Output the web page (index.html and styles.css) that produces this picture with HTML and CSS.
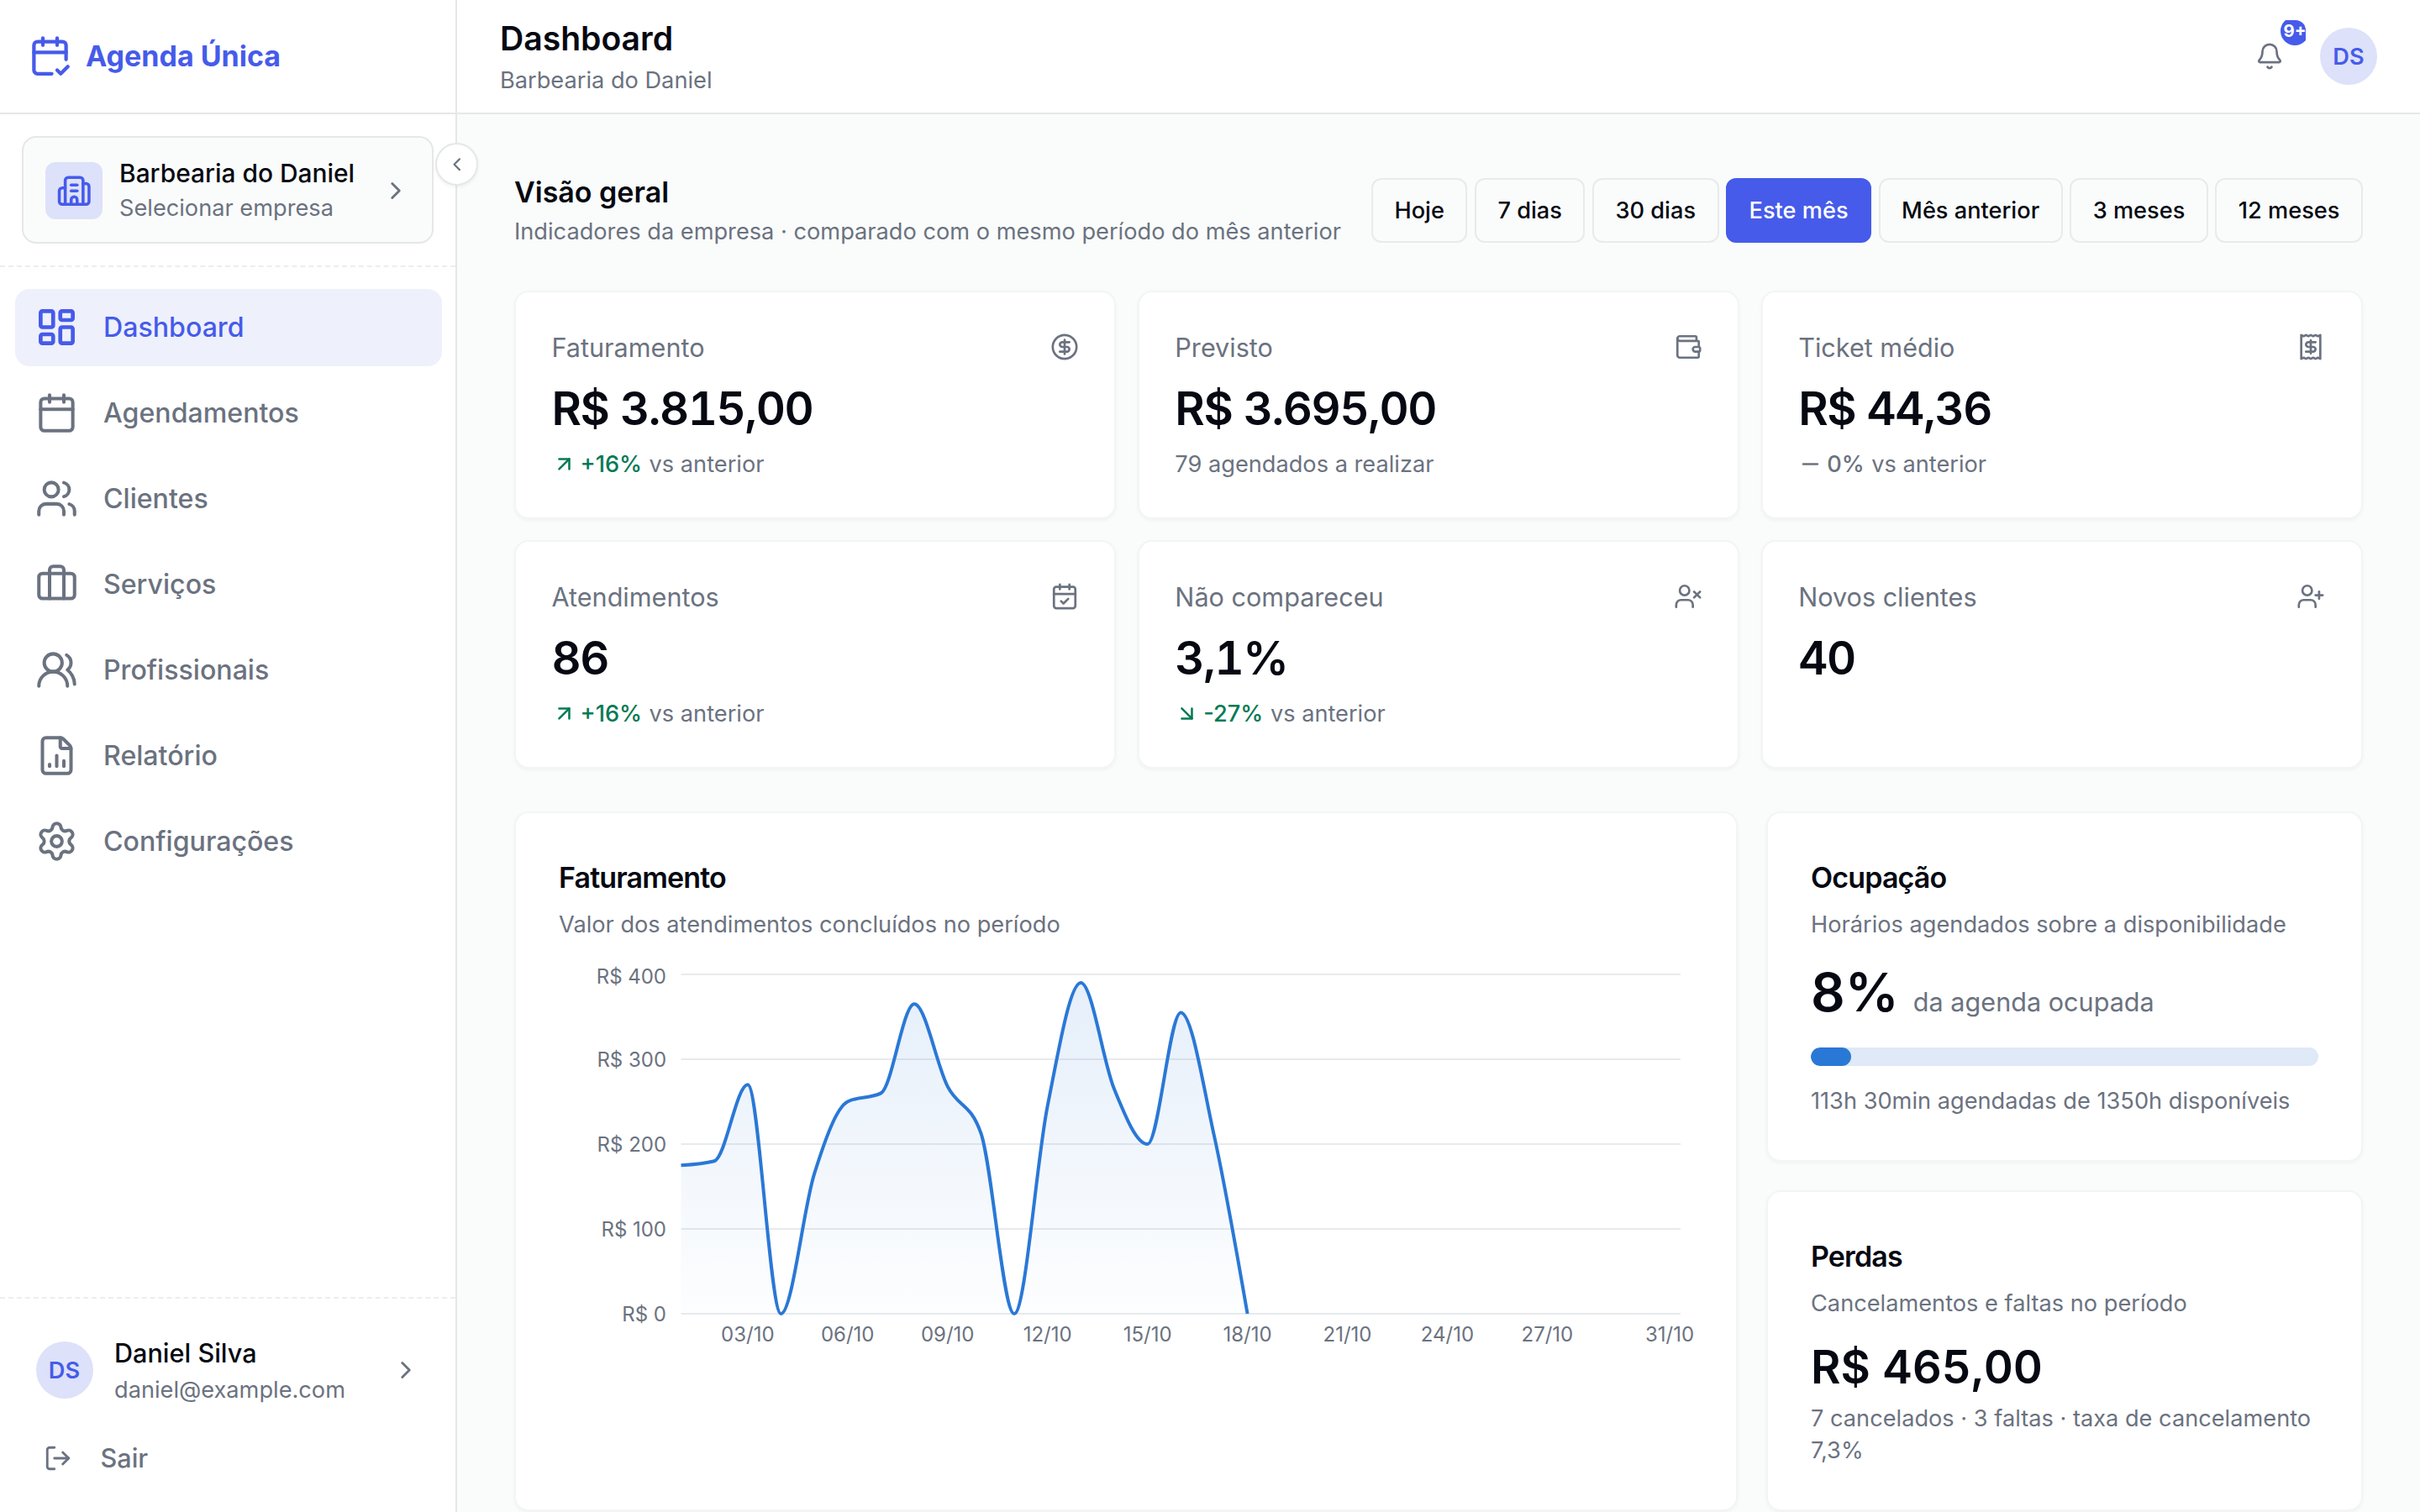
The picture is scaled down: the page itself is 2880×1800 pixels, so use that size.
FILE: index.html
```html
<!DOCTYPE html>
<html lang="pt-BR">
<head>
    <meta charset="UTF-8">
    <meta name="viewport" content="width=device-width, initial-scale=1.0">
    <title>Dashboard - Agenda Única</title>
    <link rel="stylesheet" href="styles.css">
</head>
<body>

<div class="app">
    <aside class="sidebar">
        <div class="brand">
            <svg class="icon icon-lg" viewBox="0 0 24 24"><path d="M8 2v4"/><path d="M16 2v4"/><path d="M21 14V6a2 2 0 0 0-2-2H5a2 2 0 0 0-2 2v14a2 2 0 0 0 2 2h8"/><path d="M3 10h18"/><path d="m16 20 2 2 4-4"/></svg>
            <span>Agenda Única</span>
        </div>

        <button class="collapse" aria-label="Recolher menu">
            <svg class="icon icon-xs" viewBox="0 0 24 24"><path d="m15 18-6-6 6-6"/></svg>
        </button>

        <div class="company-wrap">
            <button class="company">
                <span class="company-icon">
                    <svg class="icon icon-md" viewBox="0 0 24 24"><path d="M10 12h4"/><path d="M10 8h4"/><path d="M14 21v-3a2 2 0 0 0-4 0v3"/><path d="M6 10H4a2 2 0 0 0-2 2v7a2 2 0 0 0 2 2h16a2 2 0 0 0 2-2V9a2 2 0 0 0-2-2h-2"/><path d="M6 21V5a2 2 0 0 1 2-2h8a2 2 0 0 1 2 2v16"/></svg>
                </span>
                <span class="two-lines">
                    <span class="line-main">Barbearia do Daniel</span>
                    <span class="line-sub">Selecionar empresa</span>
                </span>
                <svg class="icon icon-sm chevron" viewBox="0 0 24 24"><path d="m9 18 6-6-6-6"/></svg>
            </button>
        </div>

        <nav class="nav">
            <a class="nav-item active">
                <svg class="icon icon-lg" viewBox="0 0 24 24"><rect x="3" y="3" width="7" height="9" rx="1"/><rect x="14" y="3" width="7" height="5" rx="1"/><rect x="14" y="12" width="7" height="9" rx="1"/><rect x="3" y="16" width="7" height="5" rx="1"/></svg>
                Dashboard
            </a>
            <a class="nav-item">
                <svg class="icon icon-lg" viewBox="0 0 24 24"><path d="M8 2v4"/><path d="M16 2v4"/><rect x="3" y="4" width="18" height="18" rx="2"/><path d="M3 10h18"/></svg>
                Agendamentos
            </a>
            <a class="nav-item">
                <svg class="icon icon-lg" viewBox="0 0 24 24"><path d="M16 21v-2a4 4 0 0 0-4-4H6a4 4 0 0 0-4 4v2"/><circle cx="9" cy="7" r="4"/><path d="M22 21v-2a4 4 0 0 0-3-3.87"/><path d="M16 3.13a4 4 0 0 1 0 7.75"/></svg>
                Clientes
            </a>
            <a class="nav-item">
                <svg class="icon icon-lg" viewBox="0 0 24 24"><path d="M16 20V4a2 2 0 0 0-2-2h-4a2 2 0 0 0-2 2v16"/><rect x="2" y="6" width="20" height="14" rx="2"/></svg>
                Serviços
            </a>
            <a class="nav-item">
                <svg class="icon icon-lg" viewBox="0 0 24 24"><path d="M18 21a8 8 0 0 0-16 0"/><circle cx="10" cy="8" r="5"/><path d="M22 20c0-3.37-2-6.5-4-8a5 5 0 0 0-.45-8.3"/></svg>
                Profissionais
            </a>
            <a class="nav-item">
                <svg class="icon icon-lg" viewBox="0 0 24 24"><path d="M6 22a2 2 0 0 1-2-2V4a2 2 0 0 1 2-2h8a2.4 2.4 0 0 1 1.704.706l3.588 3.588A2.4 2.4 0 0 1 20 8v12a2 2 0 0 1-2 2z"/><path d="M14 2v5a1 1 0 0 0 1 1h5"/><path d="M8 18v-1"/><path d="M12 18v-6"/><path d="M16 18v-3"/></svg>
                Relatório
            </a>
            <a class="nav-item">
                <svg class="icon icon-lg" viewBox="0 0 24 24"><path d="M9.671 4.136a2.34 2.34 0 0 1 4.659 0 2.34 2.34 0 0 0 3.319 1.915 2.34 2.34 0 0 1 2.33 4.033 2.34 2.34 0 0 0 0 3.831 2.34 2.34 0 0 1-2.33 4.033 2.34 2.34 0 0 0-3.319 1.915 2.34 2.34 0 0 1-4.659 0 2.34 2.34 0 0 0-3.32-1.915 2.34 2.34 0 0 1-2.33-4.033 2.34 2.34 0 0 0 0-3.831A2.34 2.34 0 0 1 6.35 6.051a2.34 2.34 0 0 0 3.319-1.915"/><circle cx="12" cy="12" r="3"/></svg>
                Configurações
            </a>
        </nav>

        <div class="account">
            <div class="user">
                <span class="avatar">DS</span>
                <span class="two-lines">
                    <span class="line-main">Daniel Silva</span>
                    <span class="line-sub">daniel@example.com</span>
                </span>
                <svg class="icon icon-sm chevron" viewBox="0 0 24 24"><path d="m9 18 6-6-6-6"/></svg>
            </div>
            <a class="logout">
                <svg class="icon icon-sm" viewBox="0 0 24 24"><path d="m16 17 5-5-5-5"/><path d="M21 12H9"/><path d="M9 21H5a2 2 0 0 1-2-2V5a2 2 0 0 1 2-2h4"/></svg>
                Sair
            </a>
        </div>
    </aside>

    <div class="page">
        <header class="topbar">
            <div>
                <h1>Dashboard</h1>
                <p class="muted">Barbearia do Daniel</p>
            </div>
            <div class="topbar-actions">
                <button class="bell" aria-label="Notificações">
                    <svg class="icon icon-sm" viewBox="0 0 24 24"><path d="M10.268 21a2 2 0 0 0 3.464 0"/><path d="M3.262 15.326A1 1 0 0 0 4 17h16a1 1 0 0 0 .74-1.673C19.41 13.956 18 12.499 18 8A6 6 0 0 0 6 8c0 4.499-1.411 5.956-2.738 7.326"/></svg>
                    <span class="badge">9+</span>
                </button>
                <span class="avatar">DS</span>
            </div>
        </header>

        <main class="content">
            <div class="overview">
                <div>
                    <h2>Visão geral</h2>
                    <p class="muted">Indicadores da empresa · comparado com o mesmo período do mês anterior</p>
                </div>
                <div class="periods">
                    <button class="period">Hoje</button>
                    <button class="period">7 dias</button>
                    <button class="period">30 dias</button>
                    <button class="period selected">Este mês</button>
                    <button class="period">Mês anterior</button>
                    <button class="period">3 meses</button>
                    <button class="period">12 meses</button>
                </div>
            </div>

            <section class="kpis">
                <div class="card kpi">
                    <div class="kpi-head">
                        <span>Faturamento</span>
                        <svg class="icon icon-sm" viewBox="0 0 24 24"><circle cx="12" cy="12" r="10"/><path d="M16 8h-6a2 2 0 1 0 0 4h4a2 2 0 1 1 0 4H8"/><path d="M12 18V6"/></svg>
                    </div>
                    <div class="kpi-value">R$ 3.815,00</div>
                    <div class="kpi-foot">
                        <span class="delta good"><svg class="icon" viewBox="0 0 24 24"><path d="M7 7h10v10"/><path d="M7 17 17 7"/></svg>+16%</span>
                        vs anterior
                    </div>
                </div>
                <div class="card kpi">
                    <div class="kpi-head">
                        <span>Previsto</span>
                        <svg class="icon icon-sm" viewBox="0 0 24 24"><path d="M19 7V4a1 1 0 0 0-1-1H5a2 2 0 0 0 0 4h15a1 1 0 0 1 1 1v4h-3a2 2 0 0 0 0 4h3a1 1 0 0 0 1-1v-2a1 1 0 0 0-1-1"/><path d="M3 5v14a2 2 0 0 0 2 2h15a1 1 0 0 0 1-1v-4"/></svg>
                    </div>
                    <div class="kpi-value">R$ 3.695,00</div>
                    <div class="kpi-foot">79 agendados a realizar</div>
                </div>
                <div class="card kpi">
                    <div class="kpi-head">
                        <span>Ticket médio</span>
                        <svg class="icon icon-sm" viewBox="0 0 24 24"><path d="M4 2v20l2-1 2 1 2-1 2 1 2-1 2 1 2-1 2 1V2l-2 1-2-1-2 1-2-1-2 1-2-1-2 1Z"/><path d="M16 8h-6a2 2 0 1 0 0 4h4a2 2 0 1 1 0 4H8"/><path d="M12 17.5v-11"/></svg>
                    </div>
                    <div class="kpi-value">R$ 44,36</div>
                    <div class="kpi-foot">
                        <span class="delta"><svg class="icon" viewBox="0 0 24 24"><path d="M5 12h14"/></svg>0%</span>
                        vs anterior
                    </div>
                </div>
                <div class="card kpi">
                    <div class="kpi-head">
                        <span>Atendimentos</span>
                        <svg class="icon icon-sm" viewBox="0 0 24 24"><path d="M8 2v4"/><path d="M16 2v4"/><rect x="3" y="4" width="18" height="18" rx="2"/><path d="M3 10h18"/><path d="m9 16 2 2 4-4"/></svg>
                    </div>
                    <div class="kpi-value">86</div>
                    <div class="kpi-foot">
                        <span class="delta good"><svg class="icon" viewBox="0 0 24 24"><path d="M7 7h10v10"/><path d="M7 17 17 7"/></svg>+16%</span>
                        vs anterior
                    </div>
                </div>
                <div class="card kpi">
                    <div class="kpi-head">
                        <span>Não compareceu</span>
                        <svg class="icon icon-sm" viewBox="0 0 24 24"><path d="M16 21v-2a4 4 0 0 0-4-4H6a4 4 0 0 0-4 4v2"/><circle cx="9" cy="7" r="4"/><path d="m17 8 5 5"/><path d="m22 8-5 5"/></svg>
                    </div>
                    <div class="kpi-value">3,1%</div>
                    <div class="kpi-foot">
                        <span class="delta good"><svg class="icon" viewBox="0 0 24 24"><path d="m7 7 10 10"/><path d="M17 7v10H7"/></svg>-27%</span>
                        vs anterior
                    </div>
                </div>
                <div class="card kpi">
                    <div class="kpi-head">
                        <span>Novos clientes</span>
                        <svg class="icon icon-sm" viewBox="0 0 24 24"><path d="M16 21v-2a4 4 0 0 0-4-4H6a4 4 0 0 0-4 4v2"/><circle cx="9" cy="7" r="4"/><path d="M19 8v6"/><path d="M22 11h-6"/></svg>
                    </div>
                    <div class="kpi-value">40</div>
                </div>
            </section>

            <section class="panels">
                <div class="card panel">
                    <h3>Faturamento</h3>
                    <p class="muted">Valor dos atendimentos concluídos no período</p>
                    <svg id="chart" class="chart" viewBox="0 0 1350 470">
                        <defs>
                            <linearGradient id="areaFill" x1="0" y1="0" x2="0" y2="1">
                                <stop class="stop-top" offset="0"/>
                                <stop class="stop-bottom" offset="1"/>
                            </linearGradient>
                        </defs>
                    </svg>
                </div>
                <div class="side-panels">
                    <div class="card panel">
                        <h3>Ocupação</h3>
                        <p class="muted">Horários agendados sobre a disponibilidade</p>
                        <div class="occupancy"><strong>8%</strong> <span>da agenda ocupada</span></div>
                        <div class="progress"><div class="progress-fill" style="width: 8%"></div></div>
                        <p class="muted">113h 30min agendadas de 1350h disponíveis</p>
                    </div>
                    <div class="card panel">
                        <h3>Perdas</h3>
                        <p class="muted">Cancelamentos e faltas no período</p>
                        <div class="loss">R$ 465,00</div>
                        <p class="muted">7 cancelados · 3 faltas · taxa de cancelamento 7,3%</p>
                    </div>
                </div>
            </section>
        </main>
    </div>
</div>

<script src="chart.js"></script>
</body>
</html>
```

FILE: styles.css
```css
* {
    box-sizing: border-box;
}

html {
    font-size: 34px;
}

body {
    margin: 0;
    font-family: Inter, "Liberation Sans", sans-serif;
    color: #060912;
    background: #fafcfb;
    overflow: hidden;
}

h1, h2, h3, p {
    margin: 0;
}

button {
    font: inherit;
    letter-spacing: inherit;
    color: inherit;
    padding: 0;
    border: 0;
    background: none;
}

.app {
    display: flex;
    height: 1800px;
}

/* icons */
.icon {
    flex: none;
    fill: none;
    stroke: currentColor;
    stroke-width: 2;
    stroke-linecap: round;
    stroke-linejoin: round;
}

.icon-xs { width: .75rem; height: .75rem; }
.icon-sm { width: 1rem; height: 1rem; }
.icon-md { width: 1.25rem; height: 1.25rem; }
.icon-lg { width: 1.5rem; height: 1.5rem; }

/* sidebar */
.sidebar {
    position: relative;
    display: flex;
    flex-direction: column;
    flex: none;
    width: 16rem;
    background: #fff;
    border-right: 2px solid #e5e7e9;
}

.brand {
    display: flex;
    align-items: center;
    gap: .5rem;
    height: 4rem;
    padding: 0 1rem 2px;
    border-bottom: 2px solid #e5e7e9;
    color: #465bea;
    font-size: 1rem;
    font-weight: 700;
}

.collapse {
    position: absolute;
    top: 170px;
    right: -27px;
    z-index: 2;
    display: flex;
    align-items: center;
    justify-content: center;
    width: 1.5rem;
    height: 1.5rem;
    border: 2px solid #e5e7e9;
    border-radius: 50%;
    background: #fff;
    color: #6b7280;
    box-shadow: 0 2px 4px rgba(0, 0, 0, .05);
}

.company-wrap {
    padding: 26px;
    border-bottom: 2px dashed #eceeef;
}

.company {
    display: flex;
    align-items: center;
    width: 100%;
    height: 128px;
    padding: 2px 26px 0;
    border: 2px solid #e5e7e9;
    border-radius: 17px;
    background: #fafcfb;
    text-align: left;
}

.company-icon {
    display: flex;
    align-items: center;
    justify-content: center;
    width: 2rem;
    height: 2rem;
    margin-right: 20px;
    border-radius: 12px;
    background: #dde1f9;
    color: #465bea;
}

.two-lines {
    display: flex;
    flex-direction: column;
    flex: 1;
}

.line-main {
    font-size: .9rem;
    font-weight: 500;
    line-height: 1.25rem;
}

.company .line-main {
    font-size: .88rem;
}

.line-sub {
    font-size: .8rem;
    line-height: 1.25rem;
    color: #6b7280;
}

.chevron {
    color: #6b7280;
}

.nav {
    display: flex;
    flex-direction: column;
    gap: .3rem;
    flex: 1;
    padding: 26px 16px 0 18px;
}

.nav-item {
    display: flex;
    align-items: center;
    gap: 30px;
    height: 2.7rem;
    padding: 0 24px;
    border-radius: 17px;
    color: #6b7280;
    font-size: .945rem;
    font-weight: 500;
}

.nav-item .icon {
    stroke-width: 1.9;
}

.nav-item.active {
    background: #eef0fb;
    color: #465bea;
}

.nav-item.active .icon {
    stroke-width: 2.2;
}

.account {
    height: 256px;
    padding: 51px .75rem 0 1.25rem;
    border-top: 2px dashed #eceeef;
}

.user {
    display: flex;
    align-items: center;
    height: 2rem;
    padding-right: 17px;
}

.user .two-lines {
    gap: 1px;
    padding-top: 4px;
}

.user .avatar {
    margin-right: .75rem;
}

.avatar {
    display: flex;
    align-items: center;
    justify-content: center;
    flex: none;
    width: 2rem;
    height: 2rem;
    border-radius: 50%;
    background: #dde1f9;
    color: #465bea;
    font-size: .8rem;
    font-weight: 600;
}

.logout {
    display: flex;
    align-items: center;
    gap: 1rem;
    margin-top: 50px;
    padding-left: 9px;
    color: #6b7280;
    font-size: .9rem;
    font-weight: 500;
    line-height: 1.25rem;
}

/* top bar */
.page {
    flex: 1;
    min-width: 0;
}

.topbar {
    display: flex;
    align-items: center;
    justify-content: space-between;
    height: 4rem;
    padding: 0 1.5rem;
    background: #fff;
    border-bottom: 2px solid #e5e7e9;
}

h1 {
    font-size: 1.15rem;
    font-weight: 600;
    line-height: 55px;
}

.muted {
    color: #6b7280;
    font-size: .8rem;
    line-height: 1.4;
}

.topbar .muted {
    margin-top: 4px;
}

.topbar-actions {
    display: flex;
    align-items: center;
    gap: .5rem;
}

.bell {
    position: relative;
    display: flex;
    align-items: center;
    justify-content: center;
    width: 87px;
    height: 87px;
    border-radius: 12px;
    color: #6b7280;
    overflow: hidden;
}

.bell .icon {
    stroke-width: 1.9;
}

.badge {
    position: absolute;
    top: -4px;
    right: -4px;
    width: 1rem;
    height: 1rem;
    border-radius: 50%;
    background: #465bea;
    color: #fff;
    font-size: .6rem;
    font-weight: 700;
    line-height: 1rem;
    text-align: center;
}

/* content */
.content {
    padding: 2rem;
}

.overview {
    display: flex;
    align-items: center;
    justify-content: space-between;
    height: 93px;
}

h2, h3 {
    font-size: 1rem;
    font-weight: 600;
    line-height: 51px;
}

h3 {
    letter-spacing: -.025em;
}

.overview .muted {
    line-height: 44px;
}

.periods {
    display: flex;
    gap: .25rem;
}

.period {
    height: 2.25rem;
    padding: 0 .75rem;
    border: 2px solid #e8eaec;
    border-radius: 12px;
    font-size: .8rem;
    font-weight: 500;
}

.period.selected {
    border-color: #465bea;
    background: #465bea;
    color: #fff;
}

.card {
    background: #fff;
    border: 2px solid #f3f5f5;
    border-radius: 17px;
    box-shadow: 0 2px 4px rgba(0, 0, 0, .04);
}

.kpis {
    display: grid;
    grid-template-columns: repeat(3, 1fr);
    grid-auto-rows: 271.5px;
    gap: .75rem;
    margin-top: 49px;
}

.kpi {
    padding: 1.25rem;
}

.kpi-head {
    display: flex;
    align-items: center;
    justify-content: space-between;
    color: #6b7280;
    font-size: .9rem;
    line-height: 45px;
}

.kpi-head .icon {
    stroke-width: 1.9;
}

.kpi-value, .loss {
    font-size: 1.6rem;
    font-weight: 600;
    line-height: 2rem;
    font-variant-numeric: tabular-nums;
}

.kpi-value {
    margin-top: 16px;
    letter-spacing: -.025em;
}

.kpi-foot {
    display: flex;
    align-items: center;
    gap: .25rem;
    margin-top: 13px;
    color: #6b7280;
    font-size: .8rem;
    line-height: 1.2rem;
}

.delta {
    display: flex;
    align-items: center;
    gap: .15rem;
    font-weight: 500;
}

.delta .icon {
    width: .85rem;
    height: .85rem;
    stroke-width: 2.1;
}

.delta.good {
    color: #047a55;
}

.panels {
    display: grid;
    grid-template-columns: 2fr 1fr;
    gap: 1rem;
    margin-top: 1.5rem;
}

.side-panels {
    display: flex;
    flex-direction: column;
    gap: 1rem;
}

.panel {
    padding: 1.5rem;
}

.panel h3 + .muted {
    margin-top: 12px;
}

.occupancy {
    display: flex;
    align-items: baseline;
    gap: .5rem;
    margin-top: 29px;
    line-height: 64px;
}

.occupancy strong {
    font-size: 1.875rem;
    font-weight: 600;
}

.occupancy span {
    color: #6b7280;
    font-size: .9rem;
}

.progress {
    height: .65rem;
    margin: 22px 0 23px;
    border-radius: 11px;
    background: #dfe9f7;
    overflow: hidden;
}

.progress-fill {
    height: 100%;
    border-radius: 11px;
    background: #2a78d6;
}

.loss {
    margin: 22px 0 9px;
}

/* chart */
.chart {
    display: block;
    width: 1350px;
    height: 470px;
    margin-top: 20px;
    overflow: visible;
}

.stop-top { stop-color: #2a78d6; stop-opacity: .12; }
.stop-bottom { stop-color: #2a78d6; stop-opacity: .01; }

.grid-line {
    stroke: #e8eaec;
    stroke-width: 2;
}

.area {
    fill: url(#areaFill);
}

.line {
    fill: none;
    stroke: #2a78d6;
    stroke-width: 4;
}

.tick {
    fill: #6b7280;
    font-size: .705rem;
}
```

FILE: chart.js
```js
const values = [175, 180, 270, 0, 165, 250, 260, 365, 268, 213, 0, 245, 390, 265, 200, 355, 210, 0];
const plot = { left: 145.5, right: 1335, top: 20, bottom: 424 };
const svg = document.getElementById('chart');

function add(tag, attrs, text) {
    const el = document.createElementNS('http://www.w3.org/2000/svg', tag);
    for (const key in attrs) el.setAttribute(key, attrs[key]);
    if (text) el.textContent = text;
    svg.appendChild(el);
}

function x(day) {
    return plot.left + (day - 1) * (plot.right - plot.left) / 30;
}

function y(value) {
    return plot.bottom - value * (plot.bottom - plot.top) / 400;
}

// monotone cubic interpolation, so the line never overshoots the values
function monotonePath(p) {
    const n = p.length;
    const s = [];
    const t = [];
    for (let i = 0; i < n - 1; i++) {
        s.push((p[i + 1][1] - p[i][1]) / (p[i + 1][0] - p[i][0]));
    }
    for (let i = 1; i < n - 1; i++) {
        const a = s[i - 1], b = s[i];
        t[i] = (Math.sign(a) + Math.sign(b)) * Math.min(Math.abs(a), Math.abs(b), Math.abs(a + b) / 4) || 0;
    }
    t[0] = (3 * s[0] - t[1]) / 2;
    t[n - 1] = (3 * s[n - 2] - t[n - 2]) / 2;

    let d = 'M' + p[0].join(',');
    for (let i = 0; i < n - 1; i++) {
        const dx = (p[i + 1][0] - p[i][0]) / 3;
        d += 'C' + [p[i][0] + dx, p[i][1] + dx * t[i], p[i + 1][0] - dx, p[i + 1][1] - dx * t[i + 1], p[i + 1][0], p[i + 1][1]].join(',');
    }
    return d;
}

for (let v = 0; v <= 400; v += 100) {
    add('line', { class: 'grid-line', x1: plot.left, x2: plot.right, y1: y(v), y2: y(v) });
    add('text', { class: 'tick', x: 128, y: y(v) + (v === 400 ? 11 : 9), 'text-anchor': 'end' }, 'R$ ' + v);
}

[3, 6, 9, 12, 15, 18, 21, 24, 27].forEach(function (day) {
    add('text', { class: 'tick', x: x(day), y: 457, 'text-anchor': 'middle' }, String(day).padStart(2, '0') + '/10');
});
add('text', { class: 'tick', x: 1351, y: 457, 'text-anchor': 'end' }, '31/10');

const points = values.map(function (v, i) { return [x(i + 1), y(v)]; });
const line = monotonePath(points);
add('path', { class: 'area', d: line + 'V' + plot.bottom + 'H' + plot.left + 'Z' });
add('path', { class: 'line', d: line });
```
